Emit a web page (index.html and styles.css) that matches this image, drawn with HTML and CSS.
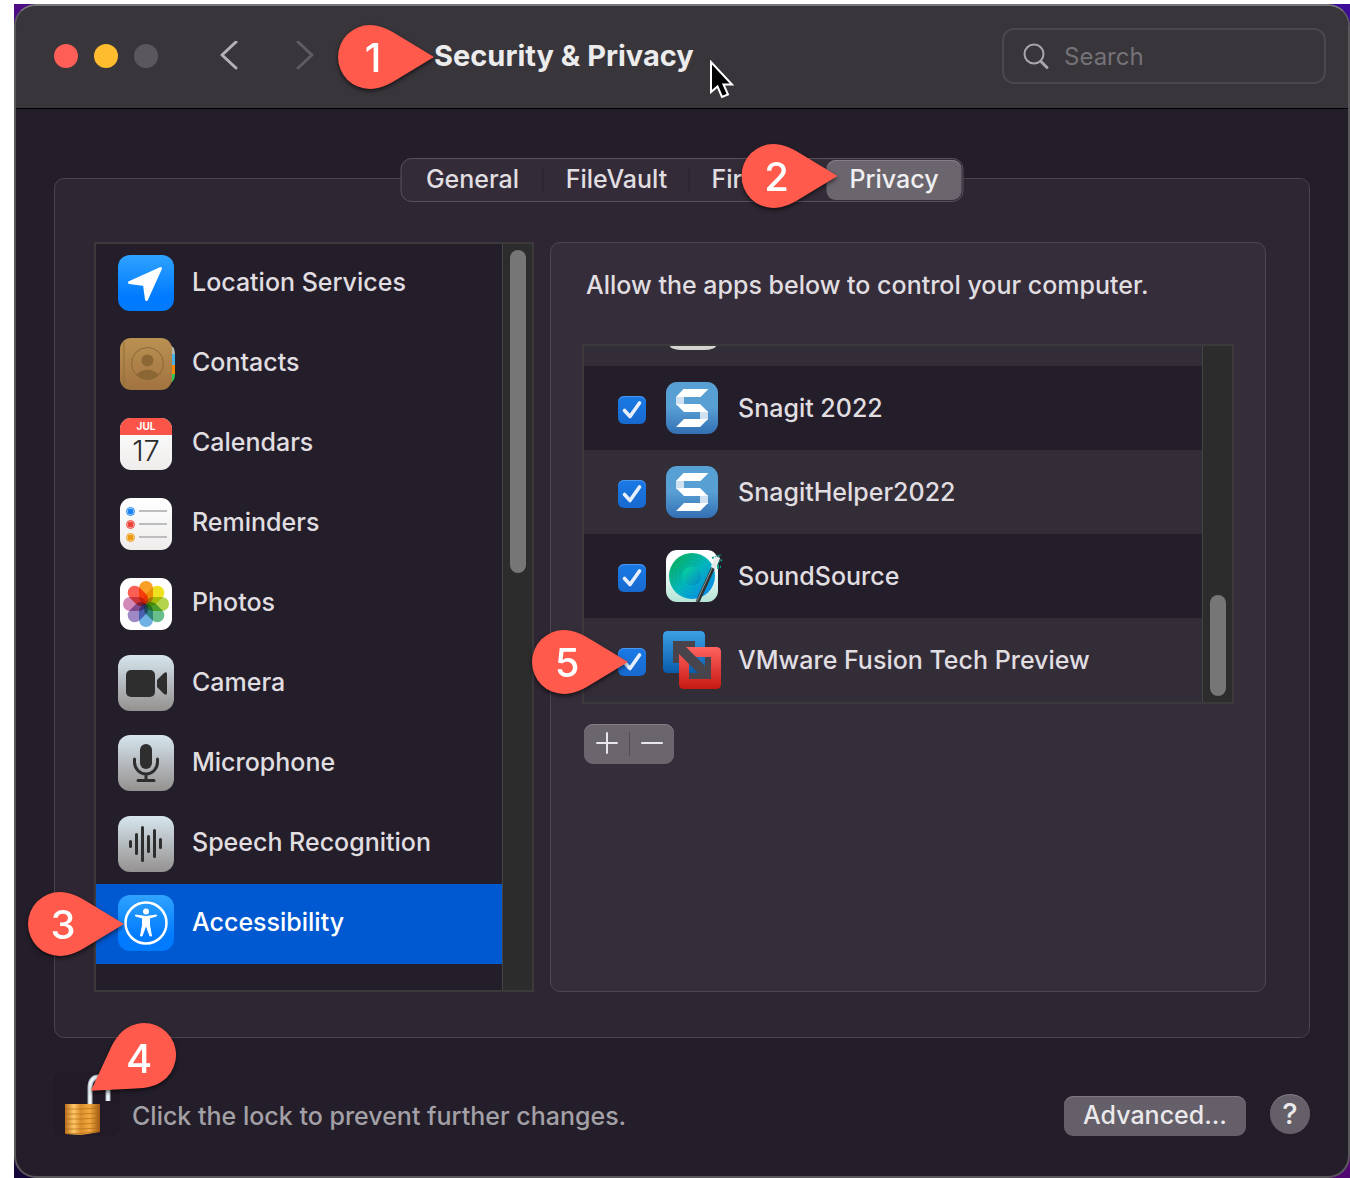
FILE: index.html
```html
<!DOCTYPE html>
<html lang="en">
<head>
<meta charset="utf-8">
<title>Security &amp; Privacy</title>
<link rel="stylesheet" href="styles.css">
</head>
<body>
<svg class="defs" aria-hidden="true">
  <defs>
    <linearGradient id="blue" x2="0" y2="1"><stop offset="0" stop-color="#2fa3ff"/><stop offset=".75" stop-color="#007aff"/></linearGradient>
    <linearGradient id="steel" x2="0" y2="1"><stop offset="0" stop-color="#d6e5ee"/><stop offset="1" stop-color="#959190"/></linearGradient>
    <linearGradient id="paper" x2="0" y2="1"><stop offset="0" stop-color="#fff"/><stop offset="1" stop-color="#efedec"/></linearGradient>
    <linearGradient id="leather" x2="0" y2="1"><stop offset="0" stop-color="#ba9152"/><stop offset="1" stop-color="#a17340"/></linearGradient>
    <linearGradient id="snag" x2="0" y2="1"><stop offset=".5" stop-color="#589fd4"/><stop offset="1" stop-color="#326fb3"/></linearGradient>
    <linearGradient id="mint" x2="0" y2="1"><stop offset=".3" stop-color="#fff"/><stop offset="1" stop-color="#b5e4d6"/></linearGradient>
    <linearGradient id="disc" x2="1" y2="1"><stop offset=".1" stop-color="#08b160"/><stop offset=".5" stop-color="#02b7bd"/><stop offset=".85" stop-color="#078fe8"/></linearGradient>
    <linearGradient id="hub" x2="1" y2="1"><stop offset="0" stop-color="#06dc98"/><stop offset="1" stop-color="#0682cf"/></linearGradient>
    <linearGradient id="vblue" x2="0" y2="1"><stop offset="0" stop-color="#3ba0e4"/><stop offset="1" stop-color="#0a5cab"/></linearGradient>
    <linearGradient id="vred" x2="0" y2="1"><stop offset="0" stop-color="#ff6360"/><stop offset="1" stop-color="#c71812"/></linearGradient>
    <linearGradient id="gold" x2="1" y2="0"><stop offset="0" stop-color="#b9701c"/><stop offset=".25" stop-color="#ffc766"/><stop offset=".45" stop-color="#d98d2c"/><stop offset=".7" stop-color="#f3a940"/><stop offset="1" stop-color="#a05a12"/></linearGradient>
    <symbol id="pin" viewBox="0 0 96 64"><path fill="#ff5a4b" d="M96 32L58 9C49 3.500 41 0 32 0A32 32 0 0 0 32 64C41 64 49 60.500 58 55Z"/></symbol>
    <symbol id="tick" viewBox="0 0 28 28"><path d="M6.500 14.500L12 20.500L21.500 7" fill="none" stroke="#e6effb" stroke-width="3.600" stroke-linecap="round" stroke-linejoin="round"/></symbol>
    <symbol id="snagit" viewBox="0 0 60 60"><rect x="4" y="4" width="52" height="52" rx="11" fill="url(#snag)"/><path fill="#cfe1f1" d="M14 19h8v8h-8zM38 33h8v9h-8z"/><path fill="#fff" d="M14 19L21.500 11H46.500L38.500 19ZM14 26H38L46 34H22ZM46 41L38 49H14L22 41Z"/></symbol>
  </defs>
</svg>

<div class="desktop">
<div class="window">
  <header class="titlebar">
    <div class="lights"><button class="light close" aria-label="Close"></button><button class="light minimise" aria-label="Minimise"></button><button class="light" aria-label="Zoom" disabled></button></div>
    <nav class="history">
      <button aria-label="Back"><svg width="18" height="30" viewBox="0 0 18 30"><path d="M16 1L2 14L16 27" stroke="#b4b2b6"/></svg></button>
      <button aria-label="Forward" disabled><svg width="18" height="30" viewBox="0 0 18 30"><path d="M2 1L16 14L2 27" stroke="#5f5c62"/></svg></button>
    </nav>
    <h1>Security &amp; Privacy
      <span class="pin"><svg><use href="#pin"/></svg><b>1</b></span>
      <svg class="cursor" width="28" height="42" viewBox="0 0 28 42"><path d="M2 2V32L8.500 26.500L13 37L19 34.500L14.500 24.500H23Z" fill="#000" stroke="#fff" stroke-width="2"/></svg>
    </h1>
    <label class="search">
      <svg width="28" height="28" viewBox="0 0 28 28"><circle cx="12" cy="12" r="9.500"/><path d="M19 19.500L25 25.500" stroke-width="3"/></svg>
      <input type="search" placeholder="Search" aria-label="Search">
    </label>
  </header>

  <main class="group">
    <div class="tabs" role="tablist">
      <button role="tab">General</button>
      <button role="tab">FileVault</button>
      <button role="tab">Firewall</button>
      <button role="tab" class="active" aria-selected="true">Privacy<span class="pin"><svg><use href="#pin"/></svg><b>2</b></span></button>
    </div>

    <div class="scrollbox sidebar">
      <ul>
        <li><a href="#location"><svg class="icon" viewBox="0 0 56 56"><rect width="56" height="56" rx="12" fill="url(#blue)"/><path d="M42.500 13.500L28.500 44.500L26.500 29.500L11.500 27.500Z" fill="#fff" stroke="#fff" stroke-width="3" stroke-linejoin="round"/></svg><span>Location Services</span></a></li>
        <li><a href="#contacts"><svg class="icon" viewBox="0 0 56 56"><path fill="#b9b9b5" d="M50 9q7 2 7 10h-7z"/><path fill="#4aaee8" d="M50 19h7v11h-7z"/><path fill="#f88a08" d="M50 30h7v9h-7z"/><path fill="#34c759" d="M50 39h7q0 8-7 10z"/><rect x="2" y="3" width="52" height="52" rx="11" fill="url(#leather)"/><path d="M6 7V51" stroke="#94703c" stroke-width="2" opacity=".5"/><g fill="#8b6736"><circle cx="29.500" cy="28.500" r="16" fill="none" stroke="#8b6736"/><circle cx="29.500" cy="25.500" r="6"/><path d="M18 39.500Q29.500 30 41 39.500Q29.500 50 18 39.500Z"/></g></svg><span>Contacts</span></a></li>
        <li><a href="#calendars"><svg class="icon" viewBox="0 0 56 56"><rect x="2" y="3" width="52" height="52" rx="11" fill="url(#paper)"/><path fill="#fb5549" d="M2 20V14A11 11 0 0 1 13 3H43A11 11 0 0 1 54 14V20Z"/><text x="28" y="15" class="month">JUL</text><text x="28" y="46" class="day">17</text></svg><span>Calendars</span></a></li>
        <li><a href="#reminders"><svg class="icon" viewBox="0 -1 56 56"><rect x="2" y="2" width="52" height="52" rx="11" fill="url(#paper)"/><path d="M21 15H49M21 28H49M21 41H49" stroke="#bdbdbf" stroke-width="2"/><g fill="none"><g stroke="#1b84f0"><circle cx="12.500" cy="15.500" r="4"/><circle cx="12.500" cy="15.500" r="1.500" stroke-width="3"/></g><g stroke="#ee4038"><circle cx="12.500" cy="28.500" r="4"/><circle cx="12.500" cy="28.500" r="1.500" stroke-width="3"/></g><g stroke="#ee9a10"><circle cx="12.500" cy="41.500" r="4"/><circle cx="12.500" cy="41.500" r="1.500" stroke-width="3"/></g></g></svg><span>Reminders</span></a></li>
        <li><a href="#photos"><svg class="icon petals" viewBox="0 -1 56 56"><rect x="2" y="2" width="52" height="52" rx="11" fill="#fff"/><rect class="petal" x="21" y="5" width="14" height="23" rx="7" fill="#fa9a1b"/><rect class="petal" x="21" y="5" width="14" height="23" rx="7" fill="#efe011" transform="rotate(45 28 28)"/><rect class="petal" x="21" y="5" width="14" height="23" rx="7" fill="#afd141" transform="rotate(90 28 28)"/><rect class="petal" x="21" y="5" width="14" height="23" rx="7" fill="#62bb85" transform="rotate(135 28 28)"/><rect class="petal" x="21" y="5" width="14" height="23" rx="7" fill="#69aee3" transform="rotate(180 28 28)"/><rect class="petal" x="21" y="5" width="14" height="23" rx="7" fill="#9a83c2" transform="rotate(225 28 28)"/><rect class="petal" x="21" y="5" width="14" height="23" rx="7" fill="#cf83b4" transform="rotate(270 28 28)"/><rect class="petal" x="21" y="5" width="14" height="23" rx="7" fill="#fb5548" transform="rotate(315 28 28)"/></svg><span>Photos</span></a></li>
        <li><a href="#camera"><svg class="icon" viewBox="0 0 56 56"><rect width="56" height="56" rx="12" fill="url(#steel)"/><rect x="8" y="15" width="29" height="27" rx="5" fill="#2e2e2e"/><path fill="#2e2e2e" d="M39 25L46 18Q49 16 49 19V38Q49 41 46 39L39 32Z"/></svg><span>Camera</span></a></li>
        <li><a href="#microphone"><svg class="icon" viewBox="0 0 56 56"><rect width="56" height="56" rx="12" fill="url(#steel)"/><rect x="22" y="9" width="12" height="25" rx="6" fill="#2e2e2e"/><path d="M16.500 24V27A11.500 12 0 0 0 39.500 27V24M28 39V45M20 45.500H36" fill="none" stroke="#2e2e2e" stroke-width="3" stroke-linecap="round"/></svg><span>Microphone</span></a></li>
        <li><a href="#speech"><svg class="icon" viewBox="0 -1 56 56"><rect width="56" height="56" rx="12" fill="url(#steel)"/><path d="M12.500 25.500V30.500M18.500 18.500V37.500M24.500 11.500V44.500M30.500 20.500V35.500M36.500 14.500V40.500M42.500 23.500V31.500" stroke="#2e2e2e" stroke-width="3" stroke-linecap="round"/></svg><span>Speech Recognition</span></a></li>
        <li class="selected"><a href="#accessibility"><svg class="icon" viewBox="0 0 56 56"><rect width="56" height="56" rx="12" fill="url(#blue)"/><circle cx="28" cy="28" r="20.500" fill="none" stroke="#fff" stroke-width="2.500"/><circle cx="28" cy="16.500" r="3" fill="#fff"/><path fill="#fff" stroke="#fff" stroke-linejoin="round" d="M17.500 20L28 21.500L38.500 20V21L31.500 23V30L33.500 41H32L28.500 31.500H27.500L24 41H22.500L24.500 30V23L17.500 21Z"/></svg><span>Accessibility</span></a><span class="pin"><svg><use href="#pin"/></svg><b>3</b></span></li>
      </ul>
      <div class="track"><div class="thumb"></div></div>
    </div>

    <section class="panel">
      <p>Allow the apps below to control your computer.</p>
      <div class="scrollbox apps">
        <ul>
          <li class="partial"><span></span></li>
          <li><label><span class="check"><input type="checkbox" checked><svg><use href="#tick"/></svg></span><svg class="app"><use href="#snagit"/></svg>Snagit 2022</label></li>
          <li><label><span class="check"><input type="checkbox" checked><svg><use href="#tick"/></svg></span><svg class="app"><use href="#snagit"/></svg>SnagitHelper2022</label></li>
          <li><label><span class="check"><input type="checkbox" checked><svg><use href="#tick"/></svg></span><svg class="app" viewBox="0 0 60 60"><rect x="4" y="4" width="52" height="52" rx="11" fill="url(#mint)"/><circle cx="30" cy="30" r="23" fill="url(#disc)"/><g fill="none" stroke="#05777a" stroke-opacity=".15"><circle cx="30" cy="30" r="20"/><circle cx="30" cy="30" r="16.500"/><circle cx="30" cy="30" r="13"/></g><circle cx="30" cy="30" r="9.500" fill="url(#hub)"/><path d="M50 12L59 9M53 17L60 14M52 20L59 21M55 12L56 23" stroke="#12a58e" stroke-width="2" stroke-dasharray="2 1"/><path d="M35.500 56L51 22" stroke="#2f3334" stroke-width="4"/><path d="M35 55L50 22" stroke="#8b9494"/><path d="M51 22L56 11" stroke="#e5e9e8" stroke-width="5"/></svg>SoundSource</label></li>
          <li><label><span class="check"><input type="checkbox" checked><svg><use href="#tick"/></svg></span><svg class="app" viewBox="0 0 60 60"><path fill="#48444c" d="M8 8h28v28H8zM24 24h28v28H24z"/><path fill="url(#vblue)" fill-rule="evenodd" d="M6 1H38Q43 1 43 6V43H6Q1 43 1 38V6Q1 1 6 1ZM11 11V33H33V11Z"/><path fill="url(#vred)" fill-rule="evenodd" d="M17 17H54Q59 17 59 22V54Q59 59 54 59H22Q17 59 17 54ZM27 27V49H49V27Z"/><path fill="#48444c" d="M17 17H24L43 36V43H36L17 24Z"/></svg>VMware Fusion Tech Preview</label><span class="pin"><svg><use href="#pin"/></svg><b>5</b></span></li>
        </ul>
        <div class="track"><div class="thumb"></div></div>
      </div>
      <div class="edit">
        <button aria-label="Add"><svg width="22" height="22" viewBox="0 0 22 22"><path d="M1 11H21M11 1V21"/></svg></button>
        <button aria-label="Remove"><svg width="22" height="22" viewBox="0 0 22 22"><path d="M1 11H21"/></svg></button>
      </div>
    </section>
  </main>

  <footer>
    <button class="lock" aria-label="Lock">
      <svg width="66" height="64" viewBox="0 0 66 64"><path d="M36 33V16Q36 5 45 5Q54 5 54 16V29" fill="none" stroke="#a9b7bd" stroke-width="5"/><path d="M36 33V16Q36 5 45 5Q54 5 54 16V29" fill="none" stroke="#edf5f8" stroke-width="3"/><path fill="url(#gold)" d="M11 32H46V60L27 63L11 62Z"/><path d="M11 37H27L46 36M11 42H27L46 41M11 47H27L46 46M11 52H27L46 51M11 57H27L46 56M11 61.500H27L46 59" fill="none" stroke="#a8610f" stroke-opacity=".55"/></svg>
      <span class="pin tilted"><svg viewBox="0 0 96 96"><path fill="#ff5a4b" transform="translate(58 36) rotate(146) translate(-32 -32)" d="M96 32L58 9C49 3.500 41 0 32 0A32 32 0 0 0 32 64C41 64 49 60.500 58 55Z"/></svg><b>4</b></span>
    </button>
    <p>Click the lock to prevent further changes.</p>
    <button class="advanced">Advanced...</button>
    <button class="help" aria-label="Help">?</button>
  </footer>
</div>
</div>
</body>
</html>
```
FILE: styles.css
```css
* { box-sizing: border-box; margin: 0; padding: 0; }
body {
  padding: 4px 0 0 14px;
  background: #fff;
  color: #e0dee1;
  font: 500 25px/32px Inter, "Liberation Sans", sans-serif;
}
button, input { font: inherit; color: inherit; background: none; border: 0; outline: 0; }
ul { list-style: none; }
a { color: inherit; text-decoration: none; }
svg { display: block; flex: none; }
.defs { position: absolute; width: 0; height: 0; }

.desktop {
  background:
    linear-gradient(#4f0d85, #150638) left / 50% 100% no-repeat,
    linear-gradient(#3d0c98, #520872) right / 50% 100% no-repeat;
}
.window {
  border: 2px solid #5b585c;
  border-top-color: #777679;
  border-radius: 22px;
  background: #241e2a;
}

/* Title bar */
.titlebar {
  display: flex;
  align-items: center;
  height: 103px;
  padding: 0 22px 2px 38px;
  border-bottom: 1px solid #000;
  border-radius: 20px 20px 0 0;
  background: #38353b;
}
.lights { display: flex; gap: 16px; }
.light { width: 24px; height: 24px; border-radius: 50%; background: #5a585c; }
.light.close { background: #ff5f57; }
.light.minimise { background: #febc2e; }
.history { display: flex; gap: 58px; margin-left: 62px; }
.history path { fill: none; stroke-width: 3; stroke-linecap: round; stroke-linejoin: round; }
h1 {
  position: relative;
  margin-left: 120px;
  font-size: 29px;
  font-weight: 700;
  color: #ececed;
  white-space: nowrap;
}
.cursor { position: absolute; left: 275px; top: 20px; }
.search {
  display: flex;
  align-items: center;
  gap: 14px;
  width: 324px;
  height: 56px;
  margin-left: auto;
  padding: 0 18px;
  border: 2px solid #4a474d;
  border-radius: 12px;
}
.search svg { fill: none; stroke: #a9a7ab; stroke-width: 2; stroke-linecap: round; }
.search input { width: 100%; min-width: 0; padding-top: 2px; font-size: 24px; font-weight: 400; }
.search input::placeholder { color: #757278; opacity: 1; }

/* Numbered callouts, drawn over the window */
.pin {
  position: absolute;
  right: 100%;
  top: 50%;
  width: 96px;
  height: 64px;
  margin-top: -31px;
  filter: drop-shadow(0 2px 2px #0009);
  z-index: 1;
}
.pin svg { width: 100%; height: 100%; }
.pin b {
  position: absolute;
  left: 0;
  top: 0;
  width: 70px;
  font: 500 40px/66px Inter, "Liberation Sans", sans-serif;
  color: #fff;
  text-align: center;
}
.pin.tilted { left: 32px; top: -53px; width: 96px; height: 96px; margin: 0; }
.pin.tilted b { left: 18px; top: 7px; }

/* Content */
.group {
  position: relative;
  display: flex;
  gap: 16px;
  margin: 69px 38px 0;
  padding: 63px 43px 45px 39px;
  border: 1px solid #4a444e;
  border-radius: 10px;
  background: #2e2632;
}
.tabs {
  position: absolute;
  left: 50%;
  top: -21px;
  translate: -50%;
  display: grid;
  grid-template-columns: 142px 146px 136px 137px;
  height: 44px;
  border: 1px solid #57525b;
  border-radius: 11px;
  background: #332c38;
}
.tabs button { position: relative; padding-bottom: 2px; line-height: 38px; }
.tabs button:nth-child(-n+2)::after {
  content: "";
  position: absolute;
  right: 0;
  top: 9px;
  width: 1px;
  height: 24px;
  background: #28222d;
}
.tabs .active {
  margin: 1px;
  border-radius: 9px;
  background: #6b666e;
  box-shadow: inset 0 1px #85818a;
  line-height: 36px;
  color: #f0eff1;
}
.tabs .pin { right: 124px; margin-top: -36px; }

.scrollbox { display: flex; border: 2px solid #3b393b; }
.scrollbox ul { flex: 1; min-width: 0; }
.track {
  width: 30px;
  padding: 6px 6px 6px 7px;
  border-left: 1px solid #464546;
  background: #2c2c2c;
}
.thumb { width: 16px; border-radius: 8px; background: #767676; }

.sidebar { width: 440px; background: #241e2a; }
.sidebar ul { padding-bottom: 26px; }
.sidebar li { position: relative; }
.sidebar a {
  display: flex;
  align-items: center;
  gap: 18px;
  height: 80px;
  padding: 0 22px 2px;
}
.sidebar a span { padding-bottom: 2px; }
.sidebar .selected { background: #0059d1; color: #fff; }
.sidebar .thumb { height: 323px; }
.sidebar .pin { right: 378px; margin-top: -32px; }
.icon { width: 56px; height: 56px; overflow: visible; }
.petals { isolation: isolate; }
.petal { mix-blend-mode: multiply; opacity: .95; }
.month { font-size: 10px; font-weight: 700; fill: #fff; text-anchor: middle; }
.day { font-size: 29px; font-weight: 300; fill: #2b2b2b; text-anchor: middle; }

.panel {
  flex: 1;
  min-width: 0;
  padding: 26px 31px;
  border: 1px solid #4d4751;
  border-radius: 10px;
  background: #352d39;
}
.panel p { padding-left: 4px; }
.apps { margin-top: 43px; }
.apps li { position: relative; background: #241e2a; }
.apps li:nth-child(odd) { background: #332d38; }
.apps .partial { height: 20px; padding-left: 86px; }
.partial span {
  display: block;
  width: 46px;
  height: 4px;
  border-radius: 0 0 12px 12px / 0 0 4px 4px;
  background: #d5d2d0;
}
.apps label {
  display: flex;
  align-items: center;
  gap: 16px;
  height: 84px;
  padding-left: 34px;
}
.app { width: 60px; height: 60px; overflow: visible; }
.check { display: grid; padding-top: 4px; }
.check > * { grid-area: 1 / 1; width: 28px; height: 28px; }
.check svg { pointer-events: none; }
.check input {
  appearance: none;
  border-radius: 6px;
  background: linear-gradient(#1a7ae6, #1769cf);
  box-shadow: inset 0 1px #4a97ec;
}
.apps .track { display: flex; align-items: flex-end; }
.apps .thumb { height: 101px; }
.apps .pin { right: auto; left: -52px; margin-top: -30px; }
.edit {
  display: flex;
  width: 90px;
  height: 40px;
  margin: 20px 0 0 2px;
  border-radius: 9px;
  background: #6b666e;
  box-shadow: inset 0 1px #85818a;
}
.edit button { display: grid; place-items: center; flex: 1; position: relative; padding-bottom: 2px; }
.edit button + button::before {
  content: "";
  position: absolute;
  left: 0;
  top: 8px;
  width: 1px;
  height: 24px;
  background: #514c54;
}
.edit path { stroke: #e8e7e9; stroke-width: 2; stroke-linecap: round; }

/* Footer */
footer {
  display: flex;
  align-items: flex-end;
  margin-top: 34px;
  padding: 0 38px 40px;
}
.lock { position: relative; border-radius: 8px; background: #221a26; }
footer p { flex: 1; margin-left: 12px; line-height: 40px; color: #a3a0a6; }
.advanced, .help {
  height: 40px;
  padding-bottom: 2px;
  background: #645f68;
  box-shadow: inset 0 1px #7d7981;
  color: #eae9eb;
}
.advanced { width: 182px; border-radius: 9px; }
.help { width: 40px; margin: 0 0 2px 24px; padding: 0; border-radius: 50%; font-size: 29px; }
```
